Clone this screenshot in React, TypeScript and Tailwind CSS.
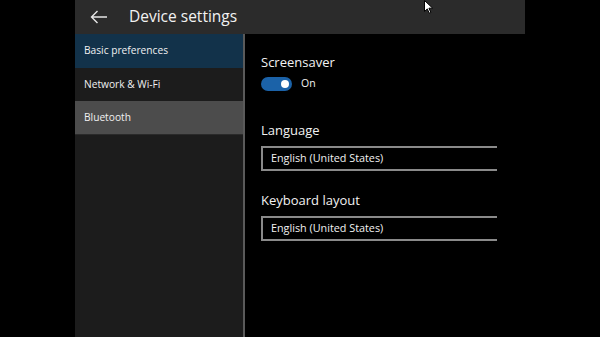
import { useState } from 'react'

const navItems = ['Basic preferences', 'Network & Wi-Fi', 'Bluetooth']

function Dropdown({ value }: { value: string }) {
  return (
    <div className="mt-[7px] h-[25px] w-[236px] border-y-2 border-l-2 border-[#8a8a8a] flex items-center pl-[8px] text-[10.8px] text-[#f2f2f2]">
      {value}
    </div>
  )
}

export default function App() {
  const [active] = useState(0)
  return (
    <div className="relative w-[600px] h-[337px] bg-black flex overflow-hidden" style={{ fontFamily: '"Open Sans", "Noto Sans", sans-serif' }}>
      <div className="w-[75px]" />
      <div className="w-[450px] flex flex-col">
        <header className="h-[34px] bg-[#2b2b2b] flex items-center shrink-0">
          <svg width="18" height="14" viewBox="0 0 18 14" className="ml-[15px]" fill="none" stroke="#e6e6e6" strokeWidth="1.4">
            <path d="M17 7H1.5M7.5 1 1.5 7l6 6" />
          </svg>
          <h1 className="ml-[21px] text-[15.5px] text-[#f2f2f2] leading-none">Device settings</h1>
        </header>
        <div className="flex flex-1">
          <nav className="w-[170px] bg-[#1c1c1c] border-r-2 border-[#5a5a5a] flex flex-col">
            {navItems.map((item, i) => (
              <div
                key={item}
                className={
                  'h-[33.5px] flex items-center pl-[9px] text-[10.2px] text-[#f0f0f0] ' +
                  (i === active ? 'bg-[#12324a]' : i === 2 ? 'bg-[#4c4c4c] border-b border-[#2a2a2a]' : '')
                }
              >
                {item}
              </div>
            ))}
          </nav>
          <main className="flex-1 pl-[16px] pt-[19px] text-[#f2f2f2]">
            <div className="text-[13px] leading-[18px]">Screensaver</div>
            <div className="mt-[5px] flex items-center gap-[9px]">
              <div className="w-[31px] h-[14px] rounded-full bg-[#1b62a8] flex items-center justify-end pr-[3px]">
                <div className="w-[8px] h-[8px] rounded-full bg-white" />
              </div>
              <span className="text-[10.5px]">On</span>
            </div>
            <div className="mt-[29px] text-[13px] leading-[18px]">Language</div>
            <Dropdown value="English (United States)" />
            <div className="mt-[20px] text-[13px] leading-[18px]">Keyboard layout</div>
            <Dropdown value="English (United States)" />
          </main>
        </div>
      </div>
      <svg className="absolute left-[424px] top-0" width="10" height="14" viewBox="0 0 10 14">
        <path d="M0.5 0.5v11l2.8-2.6 2 4.3 1.6-0.8-2-4.2h3.8z" fill="#fff" stroke="#000" strokeWidth="1" />
      </svg>
    </div>
  )
}
